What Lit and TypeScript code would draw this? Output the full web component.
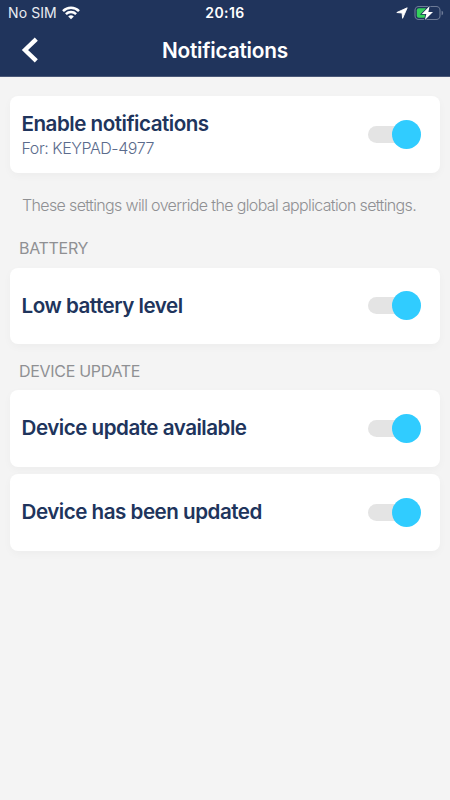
import { LitElement, html, css, nothing } from "lit";
import { customElement, property } from "lit/decorators.js";

@customElement("toggle-switch")
class ToggleSwitch extends LitElement {
  static styles = css`
    :host { display: flex; flex: none; }
    .track {
      display: flex; align-items: center; justify-content: flex-end;
      width: 53px; height: 17px; border-radius: 9px;
      background: linear-gradient(#e4e4e4, #e4e4e4) left center / 40px 17px no-repeat;
    }
    .knob { flex: none; width: 29px; height: 29px; border-radius: 50%; background: #30ccff; }
  `;
  render() {
    return html`<div class="track"><div class="knob"></div></div>`;
  }
}

@customElement("setting-card")
class SettingCard extends LitElement {
  @property() label = "";
  @property() detail = "";
  static styles = css`
    :host {
      display: flex; align-items: center; justify-content: space-between;
      box-sizing: border-box; height: 76.5px; padding: 0 19px 0 11.5px;
      border-radius: 8px; background: #fff;
      box-shadow: 0 3px 8px rgba(0, 0, 0, 0.03);
    }
    .text { white-space: nowrap; }
    .label { font-size: 20.6px; line-height: 26px; font-weight: 600; letter-spacing: -0.49px; color: #20345c; }
    .detail { font-size: 16px; line-height: 22px; font-weight: 300; letter-spacing: -0.44px; color: #5b6b8c; }
    .detailed { padding-top: 2px; }
  `;
  render() {
    return html`
      <div class="text ${this.detail ? "detailed" : ""}">
        <div class="label">${this.label}</div>
        ${this.detail ? html`<div class="detail">${this.detail}</div>` : nothing}
      </div>
      <toggle-switch></toggle-switch>
    `;
  }
}

@customElement("app-root")
class AppRoot extends LitElement {
  static styles = css`
    :host {
      display: block; height: 800px; overflow: hidden; background: #f4f4f4;
      font-family: Inter, "Liberation Sans", sans-serif;
    }
    header { height: 77px; box-sizing: border-box; background: #20345c; color: #fff; border-bottom: 1px solid #4a5878; }
    .status, .nav { display: grid; grid-template-columns: 1fr auto 1fr; align-items: center; }
    .status { height: 25px; }
    .nav { height: 51px; }
    .carrier { display: flex; align-items: center; padding-left: 8px; gap: 5.5px; font-size: 14px; letter-spacing: 0.1px; color: #e9ecf2; }
    .time { font-size: 14px; font-weight: 600; letter-spacing: 0.4px; }
    .power { display: flex; align-items: center; justify-content: flex-end; padding-right: 6px; gap: 6px; }
    .back { padding-left: 21px; }
    .back svg { margin-top: -1px; }
    .title { font-size: 20.8px; font-weight: 600; letter-spacing: -0.2px; }
    svg { display: block; }
    main { padding: 19px 10px 0; }
    .note { height: 64px; line-height: 65px; padding-left: 12px; font-size: 16px; font-weight: 300; letter-spacing: -0.64px; color: #8f9093; white-space: nowrap; }
    .section { padding-left: 9px; font-size: 16px; letter-spacing: -0.3px; color: #8f9093; }
    .battery { height: 31px; line-height: 23px; }
    .update { height: 46px; line-height: 54px; }
    .stack { display: grid; gap: 7.5px; }
  `;
  render() {
    return html`
      <header>
        <div class="status">
          <div class="carrier">
            <span>No SIM</span>
            <svg width="18" height="14" viewBox="0 0 18 14" fill="none" stroke="#fff" stroke-width="2.5">
              <path d="M1 5.1C5.5.6 12.5.6 17 5.1" />
              <path d="M3.9 8.1C6.8 5.3 11.2 5.3 14.1 8.1" />
              <path d="M9 13.2L6.2 10.5Q9 8.2 11.8 10.5Z" fill="#fff" stroke="none" />
            </svg>
          </div>
          <div class="time">20:16</div>
          <div class="power">
            <svg width="12" height="12" viewBox="0 0 12 12"><path d="M11.2.8L6.6 11.3L6.1 6L.8 5.5Z" fill="#fff" stroke="#fff" stroke-width=".9" stroke-linejoin="round" /></svg>
            <svg width="30" height="16" viewBox="0 0 30 16">
              <rect x="1" y="1.5" width="25" height="13" rx="3.8" fill="none" stroke="#6d7b97" stroke-width="1.1" />
              <path d="M27.6 5.8Q29.2 6.2 29.2 8T27.6 10.2Z" fill="#6d7b97" />
              <rect x="2.8" y="3.2" width="10.2" height="9.6" rx="2" fill="#34d15b" />
              <path d="M15.6 1L7.8 9H12.3L10.9 15L19 7H14.4Z" fill="#fff" stroke="#20345c" stroke-width="1.6" paint-order="stroke" />
            </svg>
          </div>
        </div>
        <div class="nav">
          <div class="back">
            <svg width="18" height="26" viewBox="0 0 18 26"><path d="M15.3 2.2L4 13L15.3 23.8" fill="none" stroke="#fff" stroke-width="4.4" /></svg>
          </div>
          <div class="title">Notifications</div>
        </div>
      </header>
      <main>
        <setting-card label="Enable notifications" detail="For: KEYPAD-4977"></setting-card>
        <div class="note">These settings will override the global application settings.</div>
        <div class="section battery">BATTERY</div>
        <setting-card label="Low battery level"></setting-card>
        <div class="section update">DEVICE UPDATE</div>
        <div class="stack">
          <setting-card label="Device update available"></setting-card>
          <setting-card label="Device has been updated"></setting-card>
        </div>
      </main>
    `;
  }
}
